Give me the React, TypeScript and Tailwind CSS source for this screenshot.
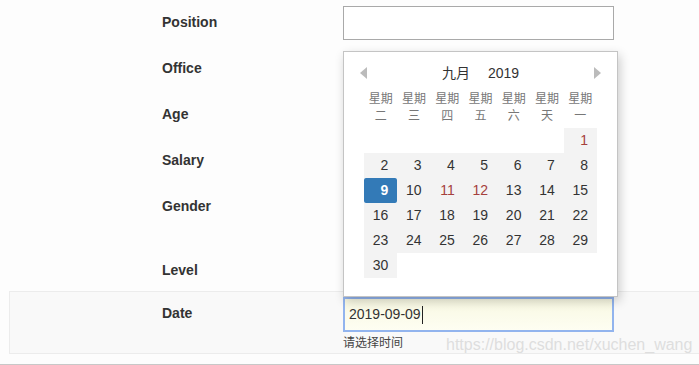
import React from "react";

const FONT = "font-['Liberation_Sans','Noto_Sans_CJK_SC',sans-serif]";

const weekdays = ["二", "三", "四", "五", "六", "天", "一"];

// blanks before the 1st, then 1..30
const cells: (number | null)[] = [null, null, null, null, null, null, ...Array.from({ length: 30 }, (_, i) => i + 1)];
const redDays = [1, 11, 12];

function FieldRow({ label, height, children }: { label: string; height: string; children?: React.ReactNode }) {
  return (
    <div className={`flex ${height}`}>
      <div className="w-[343px] shrink-0 pl-[162px] pt-[14px] text-[14px] font-bold leading-[16px] text-[#333]">{label}</div>
      <div className="pt-[6px]">{children}</div>
    </div>
  );
}

function DayCell({ day }: { day: number | null }) {
  if (day === null) return <div className="h-[25px]" />;
  if (day === 9) {
    return (
      <div className="h-[25px] rounded-[2px] bg-[#337ab7] pr-[9px] text-right text-[14px] font-bold leading-[25px] text-white">
        {day}
      </div>
    );
  }
  const color = redDays.includes(day) ? "text-[#a5403c]" : "text-[#333]";
  return <div className={`h-[25px] bg-[#f3f3f3] pr-[9px] text-right text-[14px] leading-[25px] ${color}`}>{day}</div>;
}

function DatePicker() {
  return (
    <div className="absolute left-[343px] top-[51px] z-10 h-[246px] w-[275px] border border-[#c4c4c4] bg-white shadow-[2px_4px_10px_rgba(0,0,0,0.2)]">
      <div className="flex h-[42px] items-center justify-between pl-[16px] pr-[16px]">
        <span className="h-0 w-0 border-y-[6px] border-r-[7px] border-y-transparent border-r-[#bbb]" />
        <div className="flex gap-[18px] text-[14px] text-[#333]">
          <span>九月</span>
          <span>2019</span>
        </div>
        <span className="h-0 w-0 border-y-[6px] border-l-[7px] border-y-transparent border-l-[#bbb]" />
      </div>
      <div className="ml-[20px] w-[233px]">
        <div className="-mt-[3px] grid h-[37px] grid-cols-7 text-[12px] leading-[17px] text-[#777]">
          {weekdays.map((d) => (
            <div key={d} className="text-center">
              星期
              <br />
              {d}
            </div>
          ))}
        </div>
        <div className="grid grid-cols-7">
          {cells.map((day, i) => (
            <DayCell key={i} day={day} />
          ))}
        </div>
      </div>
    </div>
  );
}

export default function App() {
  return (
    <div className={`relative h-[365px] w-[699px] overflow-hidden bg-[#fdfdfd] ${FONT}`}>
      <div className="border-b border-[#c8c8c8]">
        <FieldRow label="Position" height="h-[46px]">
          <div className="h-[34px] w-[271px] border border-[#a9a9a9] bg-white" />
        </FieldRow>
        <FieldRow label="Office" height="h-[46px]" />
        <FieldRow label="Age" height="h-[46px]" />
        <FieldRow label="Salary" height="h-[46px]" />
        <FieldRow label="Gender" height="h-[64px]" />
        <FieldRow label="Level" height="h-[43px]" />

        <div className="ml-[9px] flex h-[63px] border-y border-l border-[#ececec] bg-[#f9f9f9]">
          <div className="w-[333px] shrink-0 pl-[152px] pt-[13px] text-[14px] font-bold leading-[16px] text-[#333]">Date</div>
          <div className="pt-[5px]">
            <div className="flex h-[35px] w-[271px] items-center border-2 border-[#92b4ee] bg-gradient-to-b from-[#f8f8e2] to-[#fefef2] pl-[4px] text-[14px] text-[#333]">
              2019-09-09
              <span className="ml-[1px] h-[18px] w-[1px] bg-[#222]" />
            </div>
            <div className="mt-[4px] text-[12px] leading-[14px] text-[#444]">请选择时间</div>
          </div>
        </div>
        <div className="h-[10px]" />
      </div>

      <DatePicker />

      <div className="absolute left-[446px] top-[336px] text-[16px] leading-[18px] text-[#dedede]">
        https://blog.csdn.net/xuchen_wang
      </div>
    </div>
  );
}
